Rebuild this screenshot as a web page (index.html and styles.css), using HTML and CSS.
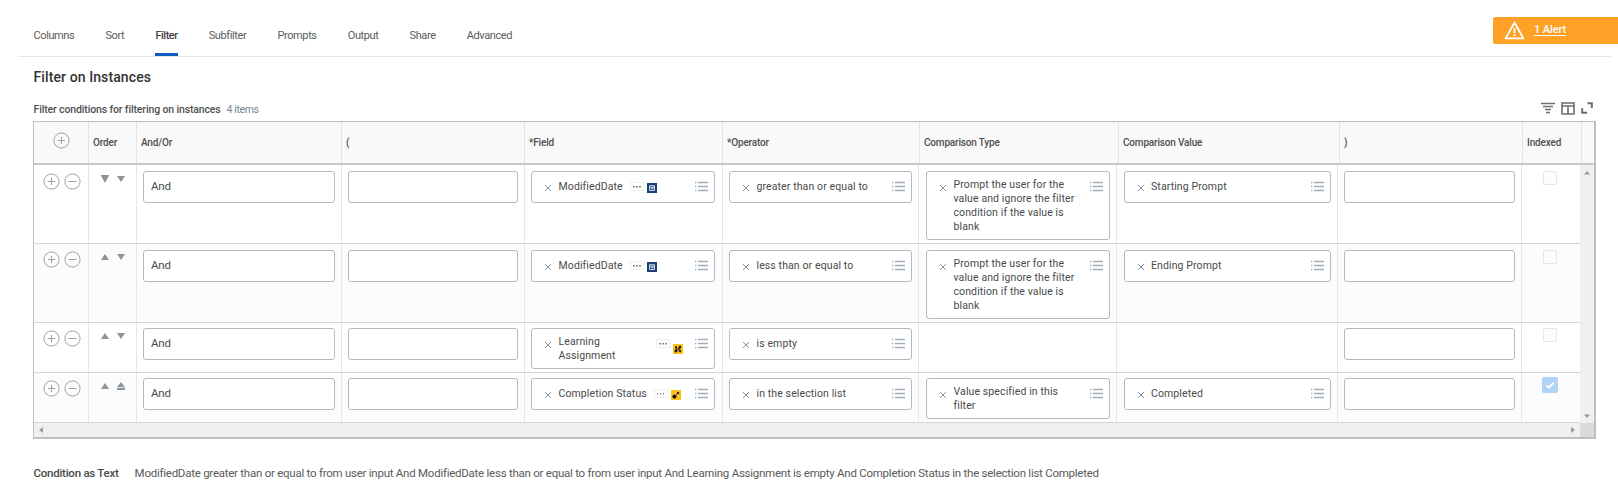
FILE: index.html
```
<!DOCTYPE html>
<html lang="en">
<head>
<meta charset="utf-8">
<title>Filter on Instances</title>
<link rel="stylesheet" href="styles.css">
</head>
<body>
<svg class="defs" width="0" height="0" aria-hidden="true">
  <symbol id="plus" viewBox="0 0 17 17"><circle cx="8.5" cy="8.5" r="7.6"/><path d="M8.5 5v7M5 8.5h7"/></symbol>
  <symbol id="minus" viewBox="0 0 17 17"><circle cx="8.5" cy="8.5" r="7.6"/><path d="M4.5 8.5h8"/></symbol>
  <symbol id="up" viewBox="0 0 8 8"><path d="M4 1l4 6H0z"/></symbol>
  <symbol id="down" viewBox="0 0 8 8"><path d="M0 1h8L4 7z"/></symbol>
  <symbol id="bottom" viewBox="0 0 8 8"><path d="M0 0h8v1.2H0zM.6 1.8h6.8L4 8z"/><path d="M0 0h8L7 2H1z"/></symbol>
  <symbol id="top" viewBox="0 0 8 8"><path d="M4 0l4 5.2H0zM0 6h8v2H0z"/></symbol>
  <symbol id="x" viewBox="0 0 8 8"><path d="M1 1l6 6M7 1L1 7"/></symbol>
  <symbol id="list" viewBox="0 0 13 11"><path d="M0 1.5h1.4M0 5.5h1.4M0 9.5h1.4M3 1.5h10M3 5.5h10M3 9.5h10"/></symbol>
  <symbol id="cal" viewBox="0 0 10 10"><path d="M2.5 2.7h5v4.8h-5zM2.5 4.2h5M4.5 4.5v1.5h1.6v-1.6"/></symbol>
</svg>

<header class="topbar">
  <nav class="tabs">
    <a class="tab">Columns</a><a class="tab">Sort</a><a class="tab active">Filter</a><a class="tab">Subfilter</a><a class="tab">Prompts</a><a class="tab">Output</a><a class="tab">Share</a><a class="tab">Advanced</a>
  </nav>
  <div class="alert">
    <svg width="21" height="19" viewBox="0 0 21 19"><path class="tri" d="M10.5 1.6L19.4 17.4H1.6z"/><path class="bang" d="M10.5 7v5M10.5 13.3v1.7"/></svg>
    <a>1 Alert</a>
  </div>
</header>

<main>
  <h1>Filter on Instances</h1>
  <div class="caption">
    <span class="title">Filter conditions for filtering on instances</span><span class="count">4 items</span>
    <div class="tools">
      <svg width="14" height="12" viewBox="0 0 14 12"><path d="M0 1.5h14M2 4.5h10M4 7.5h6M5 10.5h4" stroke-width="1.5"/></svg>
      <svg width="14" height="13" viewBox="0 0 14 13"><path d="M1 1h12v11H1zM1 4h12M7 4v8" stroke-width="1.6"/></svg>
      <svg width="12" height="12" viewBox="0 0 12 12"><path d="M6.5 1.3h4.3V6M1.2 6.3v4.5h5" stroke-width="2"/></svg>
    </div>
  </div>

  <section class="table">
    <div class="thead">
      <div class="center"><svg class="circ"><use href="#plus"/></svg></div>
      <div>Order</div><div>And/Or</div><div>(</div><div>*Field</div><div>*Operator</div><div>Comparison Type</div><div>Comparison Value</div><div>)</div><div>Indexed</div><div></div>
    </div>
    <div class="body">
      <div class="rows">
        <div class="row r1">
          <div class="btns"><svg class="circ"><use href="#plus"/></svg><svg class="circ"><use href="#minus"/></svg></div>
          <div class="order"><svg><use href="#bottom"/></svg><svg><use href="#down"/></svg></div>
          <div><div class="input">And</div></div>
          <div><div class="input"></div></div>
          <div><div class="select"><svg class="x"><use href="#x"/></svg><span>ModifiedDate</span><i class="more"></i><svg class="tag date"><use href="#cal"/></svg><svg class="list"><use href="#list"/></svg></div></div>
          <div><div class="select"><svg class="x"><use href="#x"/></svg><span>greater than or equal to</span><svg class="list"><use href="#list"/></svg></div></div>
          <div><div class="select multi"><svg class="x"><use href="#x"/></svg><span>Prompt the user for the<br>value and ignore the filter<br>condition if the value is<br>blank</span><svg class="list"><use href="#list"/></svg></div></div>
          <div><div class="select"><svg class="x"><use href="#x"/></svg><span>Starting Prompt</span><svg class="list"><use href="#list"/></svg></div></div>
          <div><div class="input"></div></div>
          <div class="check"><i></i></div>
        </div>
        <div class="row r2">
          <div class="btns"><svg class="circ"><use href="#plus"/></svg><svg class="circ"><use href="#minus"/></svg></div>
          <div class="order"><svg><use href="#up"/></svg><svg><use href="#down"/></svg></div>
          <div><div class="input">And</div></div>
          <div><div class="input"></div></div>
          <div><div class="select"><svg class="x"><use href="#x"/></svg><span>ModifiedDate</span><i class="more"></i><svg class="tag date"><use href="#cal"/></svg><svg class="list"><use href="#list"/></svg></div></div>
          <div><div class="select"><svg class="x"><use href="#x"/></svg><span>less than or equal to</span><svg class="list"><use href="#list"/></svg></div></div>
          <div><div class="select multi"><svg class="x"><use href="#x"/></svg><span>Prompt the user for the<br>value and ignore the filter<br>condition if the value is<br>blank</span><svg class="list"><use href="#list"/></svg></div></div>
          <div><div class="select"><svg class="x"><use href="#x"/></svg><span>Ending Prompt</span><svg class="list"><use href="#list"/></svg></div></div>
          <div><div class="input"></div></div>
          <div class="check"><i></i></div>
        </div>
        <div class="row r3">
          <div class="btns"><svg class="circ"><use href="#plus"/></svg><svg class="circ"><use href="#minus"/></svg></div>
          <div class="order"><svg><use href="#up"/></svg><svg><use href="#down"/></svg></div>
          <div><div class="input">And</div></div>
          <div><div class="input"></div></div>
          <div><div class="select multi learn"><svg class="x"><use href="#x"/></svg><span>Learning<br>Assignment</span><i class="more"></i><svg class="tag gold" viewBox="0 0 10 10"><path d="M3 3v4M3 5h4.5M6 3v4"/><circle cx="3" cy="3" r=".6"/><circle cx="7" cy="3" r=".9"/><circle cx="3" cy="7" r="1.1"/><circle cx="7.2" cy="7.2" r=".7"/></svg><svg class="list"><use href="#list"/></svg></div></div>
          <div><div class="select"><svg class="x"><use href="#x"/></svg><span>is empty</span><svg class="list"><use href="#list"/></svg></div></div>
          <div></div>
          <div></div>
          <div><div class="input"></div></div>
          <div class="check"><i></i></div>
        </div>
        <div class="row r4">
          <div class="btns"><svg class="circ"><use href="#plus"/></svg><svg class="circ"><use href="#minus"/></svg></div>
          <div class="order"><svg><use href="#up"/></svg><svg><use href="#top"/></svg></div>
          <div><div class="input">And</div></div>
          <div><div class="input"></div></div>
          <div><div class="select"><svg class="x"><use href="#x"/></svg><span>Completion Status</span><i class="more"></i><svg class="tag gold" viewBox="0 0 10 10"><path d="M3.2 7L7 3.2"/><circle cx="3.4" cy="6.6" r="1.6"/><circle cx="7.1" cy="3" r=".8"/></svg><svg class="list"><use href="#list"/></svg></div></div>
          <div><div class="select"><svg class="x"><use href="#x"/></svg><span>in the selection list</span><svg class="list"><use href="#list"/></svg></div></div>
          <div><div class="select multi"><svg class="x"><use href="#x"/></svg><span>Value specified in this<br>filter</span><svg class="list"><use href="#list"/></svg></div></div>
          <div><div class="select"><svg class="x"><use href="#x"/></svg><span>Completed</span><svg class="list"><use href="#list"/></svg></div></div>
          <div><div class="input"></div></div>
          <div class="check on"><svg width="16" height="16" viewBox="0 0 16 16"><path d="M4.6 8.4l2.2 2.2 4.8-5"/></svg></div>
        </div>
      </div>
      <div class="vbar"><svg width="6" height="4" viewBox="0 0 6 4"><path d="M3 0l3 3.6H0z"/></svg><svg width="6" height="4" viewBox="0 0 6 4"><path d="M0 .4h6L3 4z"/></svg></div>
    </div>
    <div class="hbar"><svg width="4" height="6" viewBox="0 0 4 6"><path d="M4 0v6L0 3z"/></svg><svg width="4" height="6" viewBox="0 0 4 6"><path d="M0 0v6l4-3z"/></svg><b></b></div>
  </section>

  <div class="summary"><span class="key">Condition as Text</span><span class="val">ModifiedDate greater than or equal to from user input And ModifiedDate less than or equal to from user input And Learning Assignment is empty And Completion Status in the selection list Completed</span></div>
</main>
</body>
</html>
```
FILE: styles.css
```
* { box-sizing: border-box; }
body { margin: 0; width: 1618px; height: 486px; overflow: hidden; background: #fff; color: #4a4a4a; font-family: Roboto, sans-serif; font-size: 12px; }
svg { display: block; flex: none; }
.defs { position: absolute; }

.topbar { display: flex; justify-content: space-between; align-items: flex-start; height: 57px; margin-left: 18px; background: linear-gradient(#e3e6ee, #e3e6ee) 0 56px / 1593px 1px no-repeat; }
.tabs { display: flex; gap: 31.1px; padding-left: 15.5px; height: 56px; }
.tab { display: flex; align-items: center; height: 56px; padding-top: 17px; font-size: 11px; letter-spacing: -.39px; color: #5b5b5b; border-bottom: 3px solid transparent; white-space: nowrap; }
.tab.active { color: #333; border-bottom-color: #0b5cc0; -webkit-text-stroke: .2px #333; }
.alert { display: flex; align-items: center; gap: 9px; width: 125px; height: 27px; margin-top: 17px; padding-left: 11px; background: #ffa126; border-radius: 2px 0 0 2px; color: #fff; font-size: 11px; letter-spacing: -.1px; font-weight: 500; }
.alert a { padding-bottom: 2px; text-decoration: underline; text-underline-offset: 2px; }
.alert path { fill: none; stroke: #fff; stroke-width: 1.9; stroke-linejoin: round; }

main { padding: 0 22px 0 33px; }
h1 { margin: 0; padding: 10px 0 0 .5px; font-size: 14px; letter-spacing: .1px; line-height: 20px; font-weight: 500; color: #333; }
.caption { display: flex; align-items: center; height: 34px; padding: 11px 0 0 .5px; font-size: 10.5px; }
.title { font-weight: 500; letter-spacing: -.14px; color: #505050; }
.count { margin-left: 6px; letter-spacing: -.4px; color: #748796; }
.tools { display: flex; align-items: center; gap: 6px; margin: -3px 3.5px 0 auto; }
.tools path { fill: none; stroke: #6a6f75; }

.table { width: 1563px; height: 318px; border: 1px solid #bfbfbf; border-right-width: 2px; border-bottom-width: 2px; }
.thead { display: grid; grid-template-columns: 55px 48px 205px 183px 198px 197px 199px 221px 183px 59px 1fr; height: 43px; background: #f9f9f9; border-bottom: 2px solid #c6c8ca; }
.thead > div { display: flex; align-items: center; padding-left: 4px; border-right: 1px solid #e3e3e3; font-size: 10px; letter-spacing: -.17px; font-weight: 500; color: #505050; }
.thead > div:last-child { border-right: 0; }
.thead > .center { justify-content: center; padding: 0 0 5px 1px; }
.circ { width: 17px; height: 17px; fill: none; stroke: #98a1a8; stroke-width: 1; }
.body { display: flex; height: 258px; }
.rows { width: 1546px; }
.row { display: grid; grid-template-columns: 55px 48px 205px 183px 198px 196px 198px 221px 184px 58px; border-bottom: 1px solid #d3d6d8; }
.row > div { padding: 6px 6px 0; border-right: 1px solid #e6e6e6; }
.row > div:last-child { border-right: 0; }
.r1, .r2 { height: 79px; }
.r3, .r4 { height: 50px; }
.r3 > div, .r4 > div { padding-top: 5px; }
.r2, .r4 { background: #fcfcfc; }
.row > .btns { display: flex; gap: 4px; padding: 7px 0 0 9px; }
.row > .order { display: flex; gap: 8px; padding: 9px 0 0 11.5px; }
.r1 > .btns { padding-top: 8px; }
.r1 > .order { padding-top: 10px; }
.order svg { width: 8px; height: 8px; fill: #8a949c; }
.row > div:nth-child(7), .row > div:nth-child(8) { padding-left: 7px; }
.row > div:nth-child(5) { padding-right: 7px; }
.row > div:nth-child(8) .x { margin-left: -.5px; margin-right: 6.5px; }
.input { height: 32px; padding-left: 7px; border: 1px solid #b0bac5; border-radius: 3px; background: #fff; font-size: 11.5px; letter-spacing: -.2px; line-height: 29px; }
.select { display: flex; height: 32px; padding-left: 12px; padding-right: 6px; border: 1px solid #b0bac5; border-radius: 3px; background: #fff; font-size: 10.5px; letter-spacing: .11px; line-height: 14px; }
.select > span { padding-top: 8px; white-space: nowrap; }
.multi { height: auto; padding-bottom: 5px; }
.multi > span { padding-top: 6px; }
.x { width: 8px; height: 8px; margin: 11.5px 6.5px 0 0; stroke: #8793a0; stroke-width: 1; }
.list { width: 13px; height: 11px; margin: 9px 0 0 auto; stroke: #a3aebc; stroke-width: 1.4; }
.more { width: 14px; height: 9px; margin: 10px 3px 0 7.5px; border: 1px solid #f0f0f0; background: linear-gradient(90deg, #888 1.5px, transparent 1.5px 3px, #888 3px 4.5px, transparent 4.5px 6px, #888 6px 7.5px, transparent 7.5px) 2px 3px / 9px 1.5px no-repeat; }
.tag { width: 10px; height: 10px; margin-top: 10.5px; }
.date { background: #1d4078; fill: none; stroke: #dbe4f2; stroke-width: .9; }
.gold { background: #ffc21a; stroke: #111; stroke-width: .9; }
.learn .more { margin-left: 40.5px; }
.learn .tag { margin-top: 15px; }
.row > .check { padding-left: 21px; }
.check i { display: block; width: 14px; height: 14px; border: 1px solid #e5e8e8; border-radius: 1px; background: #fbfcfc; }
.check svg { margin: -1px; border-radius: 2px; background: #b1d3f6; }
.check path { fill: none; stroke: #fff; stroke-width: 1.9; }
.vbar { display: flex; flex-direction: column; align-items: center; justify-content: space-between; width: 15px; padding: 6px 0 5px; background: #f0f0f0; }
.vbar path, .hbar path { fill: #999; }
.hbar { display: flex; align-items: center; justify-content: space-between; height: 14px; padding-left: 5px; background: #f0f0f0; }
.hbar svg:nth-child(2) { margin-left: auto; margin-right: 5px; }
.hbar b { width: 14px; height: 14px; background: #dadada; }

.summary { display: flex; gap: 16px; padding: 27px 0 0 .5px; line-height: 14px; font-size: 11.5px; letter-spacing: -.25px; color: #5a5a5a; white-space: nowrap; }
.key { font-weight: 500; color: #4a4a4a; }
```
